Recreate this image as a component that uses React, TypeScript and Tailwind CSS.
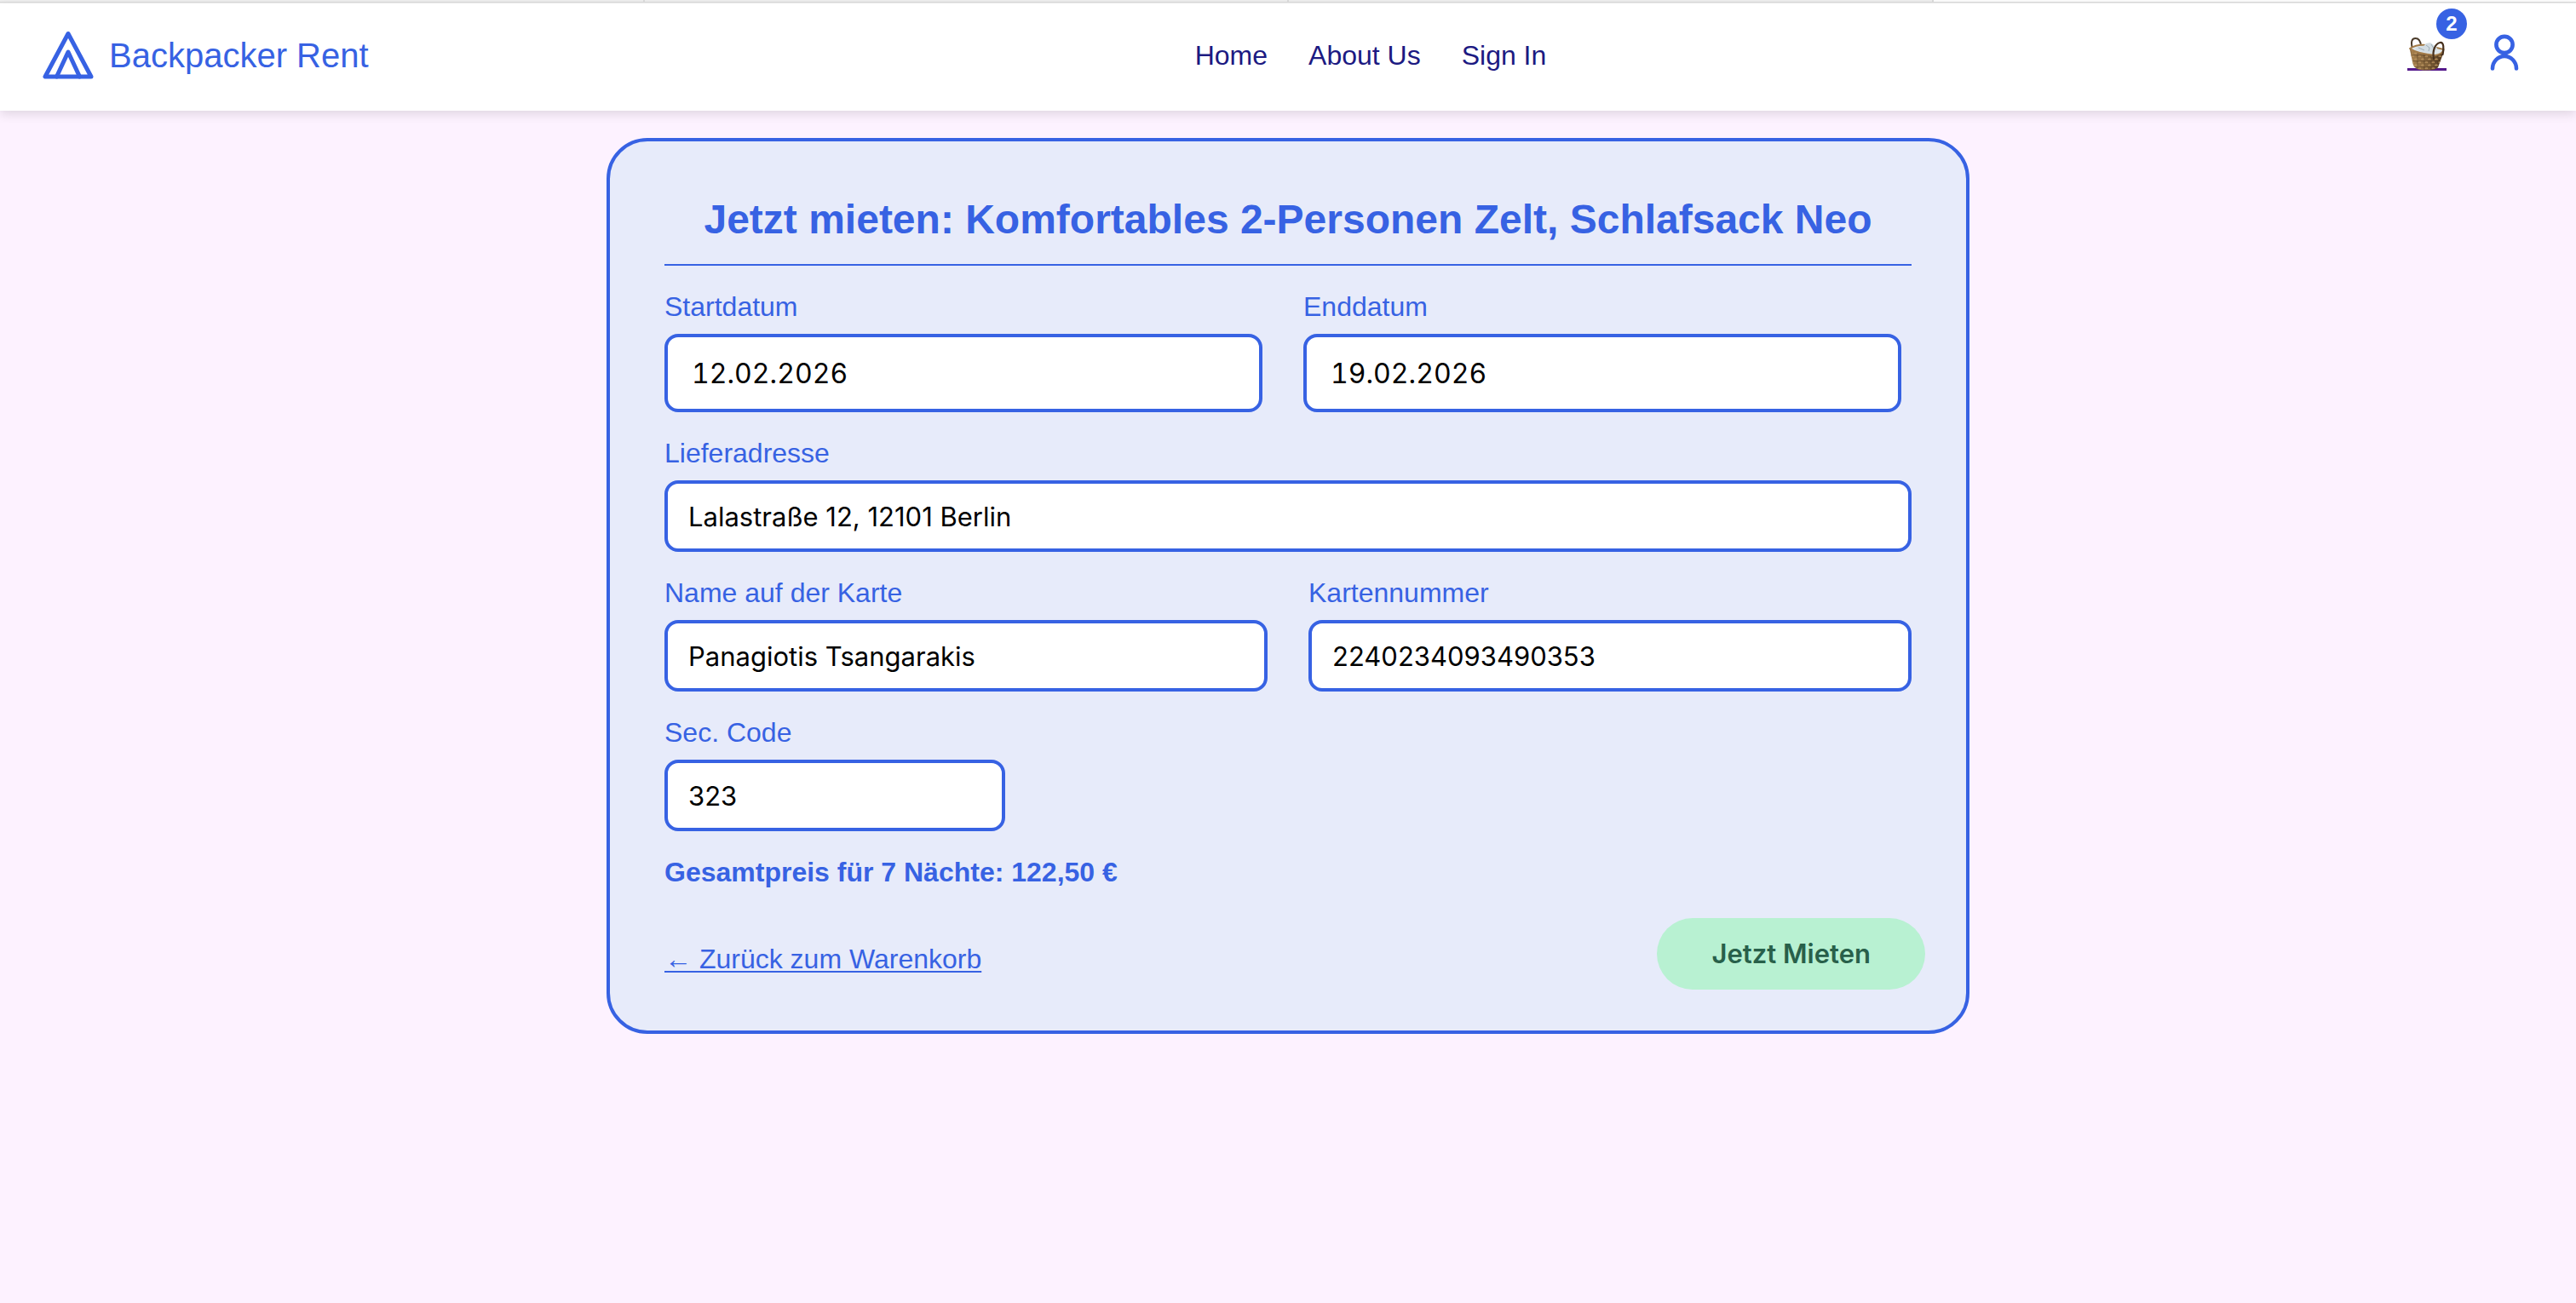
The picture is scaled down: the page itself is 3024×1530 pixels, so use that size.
import type { ReactNode } from "react";

const tabSlots = [0, 1, 2, 3];

function LogoIcon() {
  return (
    <svg viewBox="0 0 64 64" className="size-16" fill="none" stroke="#3762e3" strokeWidth="5" strokeLinecap="round" strokeLinejoin="round" aria-hidden="true">
      <path d="M32 6.500 5 57H59Z" />
      <path d="M18.500 57 32 28 45.500 57" />
    </svg>
  );
}

function UserIcon() {
  return (
    <svg viewBox="0 0 48 48" className="size-12" fill="none" stroke="#3762e3" strokeWidth="4.6" strokeLinecap="round" aria-hidden="true">
      <circle cx="24" cy="14.500" r="9.600" />
      <path d="M10 42.500a14 14.500 0 0 1 28 0" />
    </svg>
  );
}

function BasketIcon() {
  return (
    <svg viewBox="0 0 46 44" className="h-11 w-[46px]" fill="none" aria-hidden="true">
      <defs>
        <linearGradient id="wicker" x1="0" x2="1" y1="0" y2="0">
          <stop offset="0" stopColor="#a9834f" />
          <stop offset="0.5" stopColor="#85653c" />
          <stop offset="1" stopColor="#4e351d" />
        </linearGradient>
        <pattern id="weave" width="8" height="7" patternUnits="userSpaceOnUse">
          <path d="M0.500 2q1.700-1.500 3.500 0M4.500 5.500q1.700-1.500 3.500 0" stroke="#b8925e" strokeWidth="1.6" />
          <path d="M0 3.700q4 1 8 0M4 0v7" stroke="#4c341c" strokeWidth="0.7" strokeOpacity="0.7" />
        </pattern>
      </defs>
      <path d="M0 41.500h46" stroke="#551a8b" strokeWidth="3" />
      <path d="M6 17C3.500 8 6 5 9.500 5s6 3 6.500 9" stroke="#4a3a2a" strokeWidth="2" />
      <path d="M3 18 6.500 35Q8 42.500 21 42.500T36 39L42.500 22Z" fill="url(#wicker)" />
      <path d="M3 18 6.500 35Q8 42.500 21 42.500T36 39L42.500 22Z" fill="url(#weave)" />
      <path d="M3 17Q11 12 22 13L42.500 18Q42 23 33 25 12 23 3 17Z" fill="#dfe6ea" stroke="#a37b48" strokeWidth="2" strokeLinejoin="round" />
      <path d="M19 14 22 11 27 10 31 13 35 16 33 21 27 22 18 21 9 18 12 15Z" fill="#d3dde3" />
      <path d="M22 13 26 16 25 20M28 12 31 17M13 16 20 19" stroke="#99a8b1" strokeWidth="0.9" />
      <path d="M31 29C29 19 33 11 38.500 10 43 9.500 43 17 41.500 24" stroke="#46301d" strokeWidth="2.200" strokeLinecap="round" />
    </svg>
  );
}

function Field({ id, label, value, className = "", tall = false }: { id: string; label: string; value: string; className?: string; tall?: boolean }) {
  return (
    <div className={className}>
      <label htmlFor={id} className="block leading-8 text-[#3762e3]">{label}</label>
      <input
        id={id}
        type="text"
        defaultValue={value}
        className={
          tall
            ? "mt-4 block h-[92px] w-full rounded-2xl border-4 border-[#3762e3] bg-white px-7 font-['Inter',sans-serif] text-[32px] tabular-nums text-black"
            : "mt-4 block h-[84px] w-full rounded-2xl border-4 border-[#3762e3] bg-white px-6 font-['Inter',sans-serif] text-[31px] text-black"
        }
      />
    </div>
  );
}

function NavLink({ children }: { children: ReactNode }) {
  return <a href="#" className="text-[#1c1a82]">{children}</a>;
}

export default function App() {
  return (
    <div className="min-h-screen bg-[#fdf2ff] font-['Liberation_Sans',Arial,sans-serif] text-[32px] leading-9">
      <div className="flex h-1 border-b border-[#eeeeee] bg-[#eeeeee]">
        {tabSlots.map((slot) => (
          <div key={slot} className="flex-1 border-r-2 border-b border-[#d8d8d8] last:border-r-0 last:bg-[#fafafa]" />
        ))}
      </div>
      <header className="grid h-[126px] grid-cols-[1fr_auto_1fr] items-center bg-white px-12 pb-1 shadow-[0_4px_12px_rgba(0,0,0,0.12)]">
        <a href="#" className="flex items-center gap-4 text-[40px] text-[#3762e3]">
          <LogoIcon />
          Backpacker Rent
        </a>
        <nav className="ml-[194px] flex gap-12">
          <NavLink>Home</NavLink>
          <NavLink>About Us</NavLink>
          <NavLink>Sign In</NavLink>
        </nav>
        <div className="flex items-center justify-end gap-11 pr-3 pb-1.5">
          <a href="#" aria-label="Warenkorb" className="relative">
            <BasketIcon />
            <span className="absolute -top-[30px] -right-6 flex size-9 items-center justify-center rounded-full bg-[#3762e3] text-[24px] font-bold text-white">2</span>
          </a>
          <a href="#" aria-label="Konto">
            <UserIcon />
          </a>
        </div>
      </header>

      <main className="px-8 pt-8">
        <form className="mx-auto max-w-[1600px] rounded-[48px] border-4 border-[#3762e3] bg-[#e7ebfa] px-16 pt-16 pb-12" onSubmit={(e) => e.preventDefault()}>
          <h1 className="border-b-2 border-[#3762e3] pb-6 text-center text-[48px] leading-14 font-bold text-[#3762e3]">
            Jetzt mieten: Komfortables 2-Personen Zelt, Schlafsack Neo
          </h1>
          <div className="mt-8 flex flex-col gap-8">
            <div className="flex gap-12 pr-3">
              <Field id="start" label="Startdatum" value="12.02.2026" className="flex-1" tall />
              <Field id="end" label="Enddatum" value="19.02.2026" className="flex-1" tall />
            </div>
            <Field id="address" label="Lieferadresse" value="Lalastraße 12, 12101 Berlin" />
            <div className="flex gap-12">
              <Field id="holder" label="Name auf der Karte" value="Panagiotis Tsangarakis" className="flex-1" />
              <Field id="number" label="Kartennummer" value="2240234093490353" className="flex-1" />
            </div>
            <Field id="code" label="Sec. Code" value="323" className="w-[400px]" />
            <p className="leading-8 font-bold text-[#3762e3]">Gesamtpreis für 7 Nächte: 122,50 €</p>
          </div>
          <div className="mt-[38px] -mr-4 flex items-center justify-between">
            <a href="#" className="pt-3 text-[#3762e3] underline decoration-2 underline-offset-[3px]">← Zurück zum Warenkorb</a>
            <button type="submit" className="h-[84px] rounded-full bg-[#b8f1d2] px-16 font-['Inter',sans-serif] text-[31px] font-semibold text-[#28604a]">
              Jetzt Mieten
            </button>
          </div>
        </form>
      </main>
    </div>
  );
}
